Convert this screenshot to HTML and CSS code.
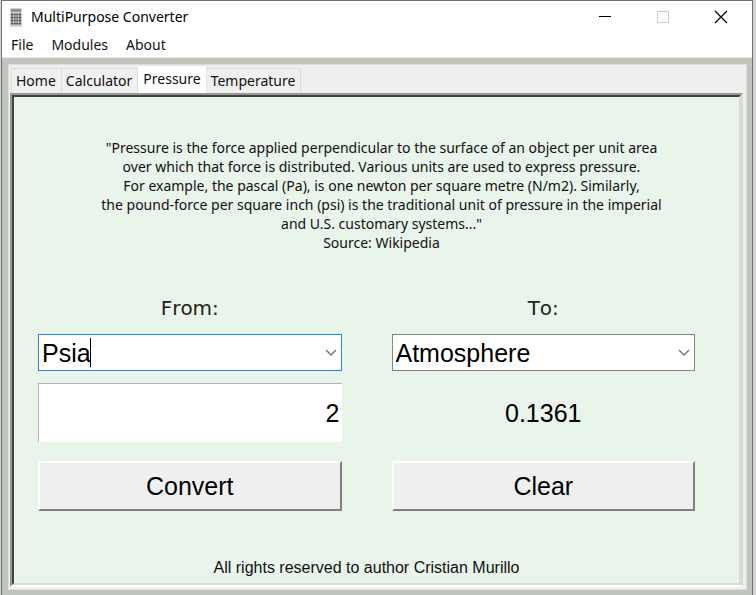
FILE: index.html
```html
<!DOCTYPE html>
<html lang="en">
<head>
<meta charset="utf-8">
<title>MultiPurpose Converter</title>
<link rel="stylesheet" href="styles.css">
</head>
<body>
<div class="window">
  <header class="titlebar">
    <svg class="app-icon" width="12" height="19" viewBox="0 0 12 19" aria-hidden="true">
      <rect width="12" height="19" fill="#d3d3d1"/>
      <rect x="1" y="1" width="10" height="3" fill="#8b978a"/>
      <path d="M1 6.500h10M1 9.500h10M1 12.500h10M1 15.500h10" stroke="#4a4a4a" stroke-width="2" stroke-dasharray="2 .67"/>
    </svg>
    <h1 class="title">MultiPurpose Converter</h1>
    <div class="controls">
      <button class="control" type="button" aria-label="Minimize">
        <svg width="14" height="14" viewBox="0 0 14 14"><path d="M1 6.500h12" stroke="#000"/></svg>
      </button>
      <button class="control" type="button" aria-label="Maximize" disabled>
        <svg width="14" height="14" viewBox="0 0 14 14"><path d="M1.500 1.500h11v11h-11z" fill="none" stroke="#ccc"/></svg>
      </button>
      <button class="control" type="button" aria-label="Close">
        <svg width="14" height="14" viewBox="0 0 14 14"><path d="M1 1l12 12M13 1L1 13" stroke="#000" stroke-width="1.200"/></svg>
      </button>
    </div>
  </header>
  <nav class="menubar">
    <button class="menu" type="button">File</button>
    <button class="menu" type="button">Modules</button>
    <button class="menu" type="button">About</button>
  </nav>
  <main class="notebook">
    <div class="tabs" role="tablist">
      <button class="tab" role="tab" type="button">Home</button>
      <button class="tab" role="tab" type="button">Calculator</button>
      <button class="tab active" role="tab" type="button" aria-selected="true">Pressure</button>
      <button class="tab" role="tab" type="button">Temperature</button>
    </div>
    <section class="pane" role="tabpanel">
      <div class="sheet">
        <p class="about">"Pressure is the force applied perpendicular to the surface of an object per unit area<br>over which that force is distributed. Various units are used to express pressure.<br>For example, the pascal (Pa), is one newton per square metre (N/m2). Similarly,<br>the pound-force per square inch (psi) is the traditional unit of pressure in the imperial<br>and U.S. customary systems..."<br>Source: Wikipedia</p>
        <form class="converter">
          <div class="column">
            <label class="label" for="from">From:</label>
            <div class="combo">
              <select class="select focused" id="from"><option>Psia</option></select>
              <span class="caret"></span>
              <svg class="chevron" width="12" height="8" viewBox="0 0 12 8" aria-hidden="true"><path d="M1 1l5 5 5-5" fill="none" stroke="#777" stroke-width="1.500"/></svg>
            </div>
            <input class="entry" type="text" value="2" aria-label="Value">
            <button class="action" type="button">Convert</button>
          </div>
          <div class="column">
            <label class="label" for="to">To:</label>
            <div class="combo">
              <select class="select" id="to"><option>Atmosphere</option></select>
              <svg class="chevron" width="12" height="8" viewBox="0 0 12 8" aria-hidden="true"><path d="M1 1l5 5 5-5" fill="none" stroke="#777" stroke-width="1.500"/></svg>
            </div>
            <output class="result" for="from to">0.1361</output>
            <button class="action" type="reset">Clear</button>
          </div>
        </form>
        <footer class="footer">All rights reserved to author Cristian Murillo</footer>
      </div>
    </section>
  </main>
</div>
</body>
</html>
```
FILE: styles.css
```css
* {
  box-sizing: border-box;
}

body {
  margin: 0;
  min-height: 100vh;
  display: flex;
  padding: 0 3px 0 1px;
  background: #d4d6d5;
  color: #111;
  font: 14px/20px "Noto Sans", "Open Sans", sans-serif;
}

button,
select,
input {
  margin: 0;
  border: 0;
  border-radius: 0;
  color: inherit;
  font: inherit;
}

.window {
  flex: 1;
  display: flex;
  flex-direction: column;
  border: 1px solid #707070;
  border-bottom: 0;
  background: #bfc5bd;
}

.titlebar {
  display: flex;
  align-items: center;
  height: 32px;
  padding: 0 2px 0 8px;
  background: #fff;
}

.title {
  flex: 1;
  margin: 0 0 0 9px;
  color: #000;
  font-size: 14px;
  font-weight: 400;
}

.controls {
  display: flex;
}

.control {
  display: flex;
  align-items: center;
  justify-content: center;
  width: 58px;
  height: 32px;
  padding: 0;
  background: none;
}

.menubar {
  display: flex;
  gap: 18px;
  height: 25px;
  padding: 0 9px;
  border-bottom: 1px solid #ececec;
  background: #fff;
}

.menu {
  height: 24px;
  padding: 0;
  background: none;
}

.notebook {
  flex: 1;
  display: flex;
  flex-direction: column;
  margin: 6px 5px 5px 6px;
  border: 1px solid #dcdfdc;
  background: #efefef;
}

.tabs {
  display: flex;
  align-items: flex-end;
  height: 28px;
  padding-left: 2px;
}

.tab {
  height: 25px;
  padding: 0 5px 0 4px;
  border: 1px solid #dcdcdc;
  border-bottom: 0;
  border-left-width: 0;
  background: #f0f0f0;
}

.tab:first-child {
  border-left-width: 1px;
}

.tab.active {
  height: 28px;
  padding: 0 5px 2px;
  border-color: #e4e4e4;
  background: #fff;
}

.pane {
  flex: 1;
  display: flex;
  margin: 0 3px 2px 1px;
  border: 2px solid;
  border-color: #939993 #d5ddd5 #fff #939993;
}

.sheet {
  flex: 1;
  padding: 41px 44px 0 24px;
  border: 2px solid;
  border-color: #3d443e #d5ddd5 #d5ddd5 #3d443e;
  background: #e9f4ea;
}

.about {
  margin: 0 0 41px;
  padding-left: 30px;
  line-height: 19px;
  text-align: center;
  white-space: nowrap;
}

.converter {
  display: grid;
  grid-template-columns: 1fr 1fr;
  column-gap: 50px;
}

.column {
  display: flex;
  flex-direction: column;
  color: #000;
  font: 25px/30px "Liberation Sans", Arial, sans-serif;
}

.label {
  margin-bottom: 11px;
  color: #222;
  font: 20px/30px "DejaVu Sans", Verdana, sans-serif;
  font-kerning: none;
  text-align: center;
}

.combo {
  position: relative;
  margin-bottom: 12px;
}

.select {
  display: block;
  width: 100%;
  height: 37px;
  padding: 0 24px 0 3px;
  border: 1px solid #858585;
  outline: 0;
  background: #fff;
  appearance: none;
}

.select.focused {
  border-color: #2587d8;
}

.caret {
  position: absolute;
  top: 4px;
  left: 52px;
  width: 1px;
  height: 29px;
  background: #000;
}

.chevron {
  position: absolute;
  top: 15px;
  right: 5px;
  pointer-events: none;
}

.entry,
.result {
  height: 59px;
  margin-bottom: 19px;
}

.entry {
  width: 100%;
  padding: 0 2px;
  border: solid #b4b4b4;
  border-width: 1px 0 0 1px;
  background: #fff;
  text-align: right;
}

.result {
  line-height: 60px;
  text-align: center;
}

.action {
  height: 50px;
  padding: 0;
  border: 2px solid;
  border-color: #fff #808080 #808080 #fff;
  background: #efefef;
}

.footer {
  margin-top: 46px;
  font: 16px/22px "Liberation Sans", Arial, sans-serif;
  text-align: center;
}
```
